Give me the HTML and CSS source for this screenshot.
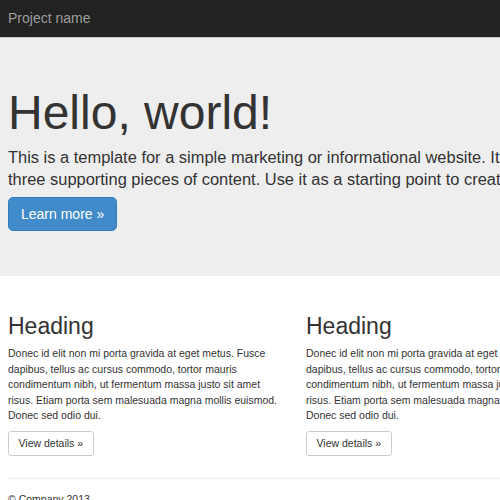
FILE: index.html
```html
<!DOCTYPE html>
<html lang="en">
<head>
<meta charset="utf-8">
<title>Jumbotron Template</title>
<link rel="stylesheet" href="styles.css">
</head>
<body>
<div class="navbar">
  <a class="brand" href="#">Project name</a>
</div>
<div class="jumbotron">
  <div class="container">
    <h1>Hello, world!</h1>
    <p class="lead">This is a template for a simple marketing or informational website. It includes a large callout called a jumbotron and three supporting pieces of content. Use it as a starting point to create something more unique.</p>
    <a class="btn btn-primary" href="#">Learn more &raquo;</a>
  </div>
</div>
<div class="container">
  <div class="row">
    <div class="col">
      <h2>Heading</h2>
      <p>Donec id elit non mi porta gravida at eget metus. Fusce dapibus, tellus ac cursus commodo, tortor mauris condimentum nibh, ut fermentum massa justo sit amet risus. Etiam porta sem malesuada magna mollis euismod. Donec sed odio dui.</p>
      <a class="btn btn-default" href="#">View details &raquo;</a>
    </div>
    <div class="col">
      <h2>Heading</h2>
      <p>Donec id elit non mi porta gravida at eget metus. Fusce dapibus, tellus ac cursus commodo, tortor mauris condimentum nibh, ut fermentum massa justo sit amet risus. Etiam porta sem malesuada magna mollis euismod. Donec sed odio dui.</p>
      <a class="btn btn-default" href="#">View details &raquo;</a>
    </div>
    <div class="col">
      <h2>Heading</h2>
      <p>Donec sed odio dui. Cras justo odio, dapibus ac facilisis in, egestas eget quam. Vestibulum id ligula porta felis euismod semper. Fusce dapibus, tellus ac cursus commodo, tortor mauris condimentum nibh, ut fermentum massa justo sit amet risus.</p>
      <a class="btn btn-default" href="#">View details &raquo;</a>
    </div>
  </div>
  <hr class="divider">
  <footer class="footer">
    <p>&copy; Company 2013</p>
  </footer>
</div>
</body>
</html>
```
FILE: styles.css
```css
html, body {
  overflow: hidden;
}
body {
  margin: 0;
  font-family: "Liberation Sans", Arial, sans-serif;
  color: #333;
  background: #fff;
  font-size: 10.5px;
  line-height: 15.4px;
}
.navbar {
  height: 37px;
  background: #222;
  border-bottom: 1px solid #c8c8c8;
}
.brand {
  display: block;
  padding-left: 8px;
  font-size: 14px;
  line-height: 37px;
  color: #9d9d9d;
  text-decoration: none;
}
.container {
  width: 872px;
  padding: 0 8px;
}
.jumbotron {
  background: #eee;
  padding: 49px 0 45px;
}
.jumbotron h1 {
  margin: 0 0 6px;
  font-size: 48px;
  line-height: 52.8px;
  font-weight: 400;
  color: #333;
}
.lead {
  max-width: 850px;
  margin: 0 0 6px;
  font-size: 16.45px;
  line-height: 22.6px;
}
.btn {
  display: inline-block;
  text-decoration: none;
  border: 1px solid transparent;
  border-radius: 4px;
  box-sizing: border-box;
}
.btn-primary {
  background: #428bca;
  border-color: #357ebd;
  color: #fff;
  font-size: 14px;
  line-height: 20px;
  padding: 6px 12px;
  border-radius: 5px;
}
.row {
  display: flex;
  gap: 22px;
}
.col {
  width: 276px;
  flex: none;
}
.col h2 {
  margin: 38px 0 7px;
  font-size: 23px;
  line-height: 25.3px;
  font-weight: 400;
}
.col p {
  margin: 0 0 8px;
}
.btn-default {
  background: #fff;
  border-color: #ccc;
  color: #333;
  font-size: 10.5px;
  line-height: 15px;
  padding: 4px 9.5px;
  border-radius: 3px;
}
.divider {
  margin: 22px 0 0;
  border: 0;
  border-top: 1px solid #eee;
}
.footer p {
  margin: 13px 0 0;
}
```
